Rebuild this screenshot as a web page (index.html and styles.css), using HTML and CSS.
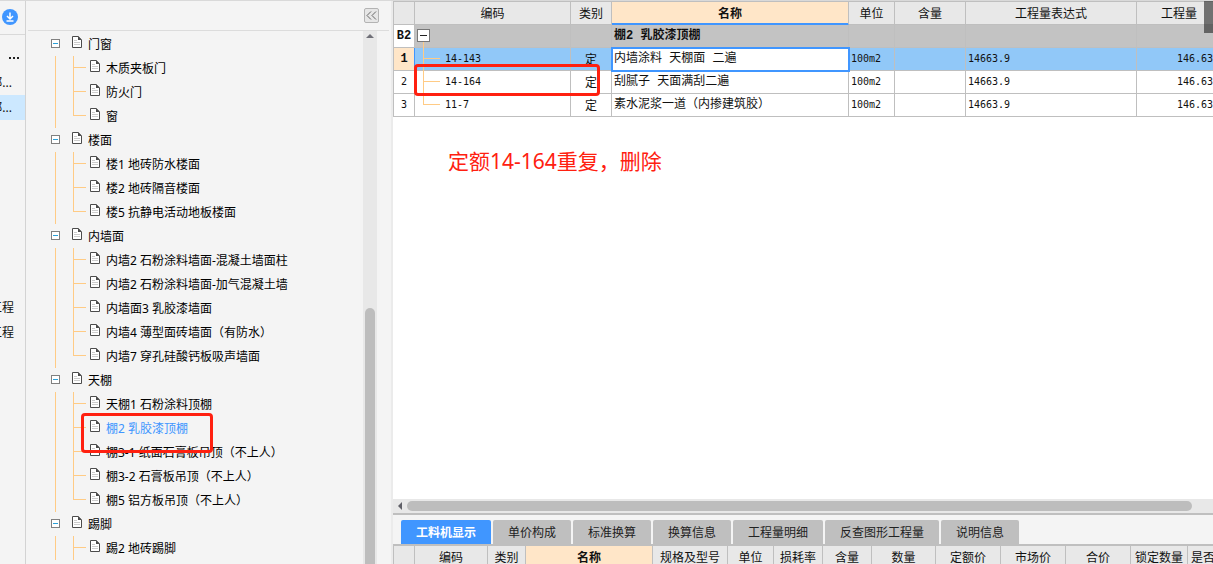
FILE: index.html
```html
<!DOCTYPE html>
<html lang="zh-CN">
<head>
<meta charset="utf-8">
<title>工程计价</title>
<link rel="stylesheet" href="styles.css">
</head>
<body>
<svg class="defs" aria-hidden="true">
  <symbol id="doc" viewBox="0 0 12 14">
    <path d="M1.5 1.5h5.6l3.4 3.4v7.6h-9z" fill="#fff" stroke="#4c4c4c"/>
    <path d="M7 1v4h4z" fill="#4c4c4c"/>
    <path d="M3 5.5h3M3 7.5h6M3 9.5h6" stroke="#ccc"/>
  </symbol>
</svg>
<div class="app">
  <aside class="rail">
    <div class="rail-top">
      <button class="download" aria-label="下载"><svg viewBox="0 0 16 16" width="16" height="16"><circle cx="8" cy="8" r="8" fill="#4096ff"/><path d="M8 3.5v6M5 7l3 3 3-3M4.5 12h7" fill="none" stroke="#fff" stroke-width="1.5"/></svg></button>
    </div>
    <ul class="rail-list">
      <li class="more"><svg viewBox="0 0 12 4" width="12" height="4"><path d="M1 1h2v2H1zM5 1h2v2H5zM9 1h2v2H9z" fill="#222"/></svg></li>
      <li>部...</li>
      <li class="current">部...</li>
    </ul>
    <ul class="rail-list rail-low">
      <li>工程</li>
      <li>工程</li>
    </ul>
  </aside>

  <section class="side">
    <header class="side-head">
      <button class="collapse" aria-label="收起"><svg viewBox="0 0 11 9" width="11" height="9"><path d="M5 .5l-4 4 4 4M10 .5l-4 4 4 4" fill="none" stroke="#666"/></svg></button>
    </header>
    <div class="side-body">
      <ul class="tree">
        <li>
          <div class="node"><button class="toggle" aria-label="折叠"></button><svg class="doc"><use href="#doc"/></svg><span>门窗</span></div>
          <ul class="kids">
            <li><svg class="doc"><use href="#doc"/></svg><span>木质夹板门</span></li>
            <li><svg class="doc"><use href="#doc"/></svg><span>防火门</span></li>
            <li><svg class="doc"><use href="#doc"/></svg><span>窗</span></li>
          </ul>
        </li>
        <li>
          <div class="node"><button class="toggle" aria-label="折叠"></button><svg class="doc"><use href="#doc"/></svg><span>楼面</span></div>
          <ul class="kids">
            <li><svg class="doc"><use href="#doc"/></svg><span>楼1 地砖防水楼面</span></li>
            <li><svg class="doc"><use href="#doc"/></svg><span>楼2 地砖隔音楼面</span></li>
            <li><svg class="doc"><use href="#doc"/></svg><span>楼5 抗静电活动地板楼面</span></li>
          </ul>
        </li>
        <li>
          <div class="node"><button class="toggle" aria-label="折叠"></button><svg class="doc"><use href="#doc"/></svg><span>内墙面</span></div>
          <ul class="kids">
            <li><svg class="doc"><use href="#doc"/></svg><span>内墙2 石粉涂料墙面-混凝土墙面柱</span></li>
            <li><svg class="doc"><use href="#doc"/></svg><span>内墙2 石粉涂料墙面-加气混凝土墙</span></li>
            <li><svg class="doc"><use href="#doc"/></svg><span>内墙面3 乳胶漆墙面</span></li>
            <li><svg class="doc"><use href="#doc"/></svg><span>内墙4 薄型面砖墙面（有防水）</span></li>
            <li><svg class="doc"><use href="#doc"/></svg><span>内墙7 穿孔硅酸钙板吸声墙面</span></li>
          </ul>
        </li>
        <li>
          <div class="node"><button class="toggle" aria-label="折叠"></button><svg class="doc"><use href="#doc"/></svg><span>天棚</span></div>
          <ul class="kids">
            <li><svg class="doc"><use href="#doc"/></svg><span>天棚1 石粉涂料顶棚</span></li>
            <li class="active"><svg class="doc"><use href="#doc"/></svg><span>棚2 乳胶漆顶棚</span><i class="mark mark-tree"></i></li>
            <li><svg class="doc"><use href="#doc"/></svg><span>棚3-1 纸面石膏板吊顶（不上人）</span></li>
            <li><svg class="doc"><use href="#doc"/></svg><span>棚3-2 石膏板吊顶（不上人）</span></li>
            <li><svg class="doc"><use href="#doc"/></svg><span>棚5 铝方板吊顶（不上人）</span></li>
          </ul>
        </li>
        <li>
          <div class="node"><button class="toggle" aria-label="折叠"></button><svg class="doc"><use href="#doc"/></svg><span>踢脚</span></div>
          <ul class="kids open">
            <li><svg class="doc"><use href="#doc"/></svg><span>踢2 地砖踢脚</span></li>
          </ul>
        </li>
      </ul>
      <div class="vscroll"><svg viewBox="0 0 8 4" width="8" height="4"><path d="M4 0l4 4H0z" fill="#707078"/></svg><div class="vthumb"></div></div>
    </div>
  </section>

  <main class="main">
    <div class="upper">
      <table class="grid">
        <colgroup><col class="w21"><col class="w156"><col class="w41"><col class="w237"><col class="w46"><col class="w71"><col class="w171"><col class="w85"></colgroup>
        <thead>
          <tr><th></th><th>编码</th><th>类别</th><th class="hot line">名称</th><th>单位</th><th>含量</th><th>工程量表达式</th><th>工程量</th></tr>
        </thead>
        <tbody>
          <tr class="group"><td class="no">B2</td><td class="code"><button class="fold" aria-label="折叠"></button></td><td></td><td class="name">棚2 乳胶漆顶棚</td><td></td><td></td><td></td><td></td></tr>
          <tr class="picked"><td class="no">1</td><td class="code branch">14-143</td><td class="kind">定</td><td class="name editing">内墙涂料 天棚面 二遍</td><td class="num">100m2</td><td></td><td class="num">14663.9</td><td class="num qty">146.63</td></tr>
          <tr><td class="no">2</td><td class="code branch">14-164<i class="mark mark-row"></i></td><td class="kind">定</td><td class="name">刮腻子 天面满刮二遍</td><td class="num">100m2</td><td></td><td class="num">14663.9</td><td class="num qty">146.63</td></tr>
          <tr><td class="no">3</td><td class="code branch last">11-7</td><td class="kind">定</td><td class="name">素水泥浆一道（内掺建筑胶）</td><td class="num">100m2</td><td></td><td class="num">14663.9</td><td class="num qty">146.63</td></tr>
        </tbody>
      </table>
      <p class="note">定额14-164重复，删除</p>
      <div class="corner"></div>
    </div>
    <div class="hscroll"><svg viewBox="0 0 4 8" width="4" height="8"><path d="M4 0v8L0 4z" fill="#606068"/></svg><div class="hthumb"></div></div>
    <nav class="tabs">
      <button class="on">工料机显示</button><button>单价构成</button><button>标准换算</button><button>换算信息</button><button>工程量明细</button><button>反查图形工程量</button><button>说明信息</button>
    </nav>
    <div class="lower">
      <table class="grid">
        <colgroup><col class="w21"><col class="w73"><col class="w38"><col class="w127"><col class="w75"><col class="w46"><col class="w49"><col class="w49"><col class="w64"><col class="w65"><col class="w65"><col class="w65"><col class="w57"><col class="w57"></colgroup>
        <thead>
          <tr><th></th><th>编码</th><th>类别</th><th class="hot">名称</th><th>规格及型号</th><th>单位</th><th>损耗率</th><th>含量</th><th>数量</th><th>定额价</th><th>市场价</th><th>合价</th><th>锁定数量</th><th class="cut">是否</th></tr>
        </thead>
      </table>
    </div>
  </main>
</div>
</body>
</html>
```
FILE: styles.css
```css
* { box-sizing: border-box; }
body {
  margin: 0;
  overflow: hidden;
  background: #f4f4f4;
  color: #111;
  font: 12px/24px "Noto Sans", "Noto Sans CJK SC", sans-serif;
}
ul { list-style: none; margin: 0; padding: 0; }
button { margin: 0; padding: 0; border: 0; background: none; font: inherit; color: inherit; }
svg { display: block; flex: none; }
.defs { position: absolute; width: 0; height: 0; }
.app { display: flex; height: 100vh; border-top: 1px solid #d9d9d9; }

.rail { flex: none; width: 26px; border-right: 1px solid #d3d3d3; overflow: hidden; }
.rail-top { height: 34px; padding: 8px 0 0 2px; border-bottom: 1px solid #d9d9d9; }
.rail-list { padding-top: 10px; }
.rail-list li { display: flex; justify-content: flex-end; align-items: center; height: 25px; padding-right: 13px; white-space: nowrap; }
.rail-list .more { padding-right: 5px; }
.rail-list .current { background: #cce8ff; }
.rail-low { padding-top: 175px; }
.rail-low li { padding-right: 11px; }

.side { flex: none; display: flex; flex-direction: column; width: 367px; padding-left: 2px; border-right: 2px solid #ebebeb; }
.side-head { display: flex; justify-content: flex-end; height: 30px; padding: 7px 10px 0 0; margin-right: 2px; border-bottom: 1px solid #dcdcdc; }
.collapse { display: grid; place-items: center; width: 15px; height: 15px; border: 1px solid #b3b3b3; border-radius: 2px; background: #e6e6e6; }
.side-body { flex: 1; display: flex; min-height: 0; overflow: hidden; }
.tree { flex: 1; padding: 1px 0 0 23px; color: #000; }
.tree span { padding-top: 2px; }
.node { display: flex; align-items: center; height: 24px; }
.toggle { position: relative; width: 9px; height: 9px; margin: 0 11px 1px 0; border: 1px solid #808080; background: #fff; }
.toggle::after { content: ""; position: absolute; left: 1px; top: 3px; width: 5px; height: 1px; background: #2ba0d8; }
.doc { width: 12px; height: 14px; margin: 0 5px 4px 0; }
.kids { margin-left: 4px; padding-left: 17px; border-left: 1px solid #ffcb85; }
.kids li { position: relative; display: flex; align-items: center; height: 24px; padding-left: 16px; white-space: nowrap; }
.kids li::before { content: ""; position: absolute; left: 0; top: 0; width: 1px; height: 24px; background: #ffcb85; }
.kids li:last-child::before { height: 12px; }
.kids.open li::before { height: 24px; }
.kids li::after { content: ""; position: absolute; left: 0; top: 11px; width: 13px; height: 1px; background: #ffcb85; }
.active span { color: #4096ff; }
.vscroll { flex: none; display: flex; flex-direction: column; align-items: center; width: 14px; margin-right: 14px; padding-top: 3px; background: #e8e8e8; }
.vthumb { flex: 1; width: 10px; margin-top: 270px; border-radius: 5px 5px 0 0; background: #bdbdbd; }

.mark { position: absolute; z-index: 2; border: 3px solid #ff2010; border-radius: 4px; pointer-events: none; }
.mark-tree { left: 8px; top: -3px; width: 132px; height: 40px; }
.mark-row { left: -1px; top: -7px; width: 186px; height: 32px; }

.main { flex: 1; display: flex; flex-direction: column; min-width: 0; }
.upper { position: relative; flex: 1; min-height: 0; overflow: hidden; background: #fff; }
.grid { table-layout: fixed; width: 0; border-collapse: separate; border-spacing: 0; border-top: 1px solid #bfbfbf; border-left: 1px solid #bfbfbf; line-height: 20px; }
.grid th, .grid td { height: 23px; padding: 0; border-right: 1px solid #bfbfbf; border-bottom: 1px solid #bfbfbf; white-space: nowrap; overflow: hidden; }
.grid th { padding-top: 2px; background: #e8e8e8; font-weight: 400; text-align: center; }
.grid .hot { background: #ffe6c8; font-weight: 700; }
.grid .line { border-bottom-color: #4096ff; box-shadow: inset 0 -1px #4096ff; }
.grid .cut { padding-left: 3px; text-align: left; }
.w21 { width: 21px; } .w38 { width: 38px; } .w41 { width: 41px; } .w46 { width: 46px; }
.w49 { width: 49px; } .w57 { width: 57px; } .w64 { width: 64px; } .w65 { width: 65px; }
.w71 { width: 71px; } .w73 { width: 73px; } .w75 { width: 75px; } .w85 { width: 85px; }
.w127 { width: 127px; } .w156 { width: 156px; } .w171 { width: 171px; } .w237 { width: 237px; }
.group td { background: #c3c3c3; font-weight: 700; }
.picked td { background: #91c8f8; }
.grid .no { background: #fff; font: 10px/20px "DejaVu Sans Mono", monospace; text-align: center; }
.grid .group .no { font: 700 12px/20px "Liberation Mono", monospace; }
.grid .picked .no { background: #ffe6c8; font: 700 12px/20px "Liberation Mono", monospace; border-right-color: #4096ff; }
.grid .code { position: relative; padding-left: 30px; overflow: visible; font: 10px/20px "DejaVu Sans Mono", monospace; }
.fold { position: absolute; left: 2px; top: 4px; width: 13px; height: 13px; border: 1px solid #777; background: #fff; }
.fold::after { content: ""; position: absolute; left: 2px; top: 5px; width: 7px; height: 1px; background: #222; }
.branch::before { content: ""; position: absolute; left: 8px; top: -1px; width: 1px; height: 24px; background: #ffcb85; }
.picked .branch::before { top: -6px; height: 29px; }
.last::before { height: 12px; }
.branch::after { content: ""; position: absolute; left: 8px; top: 10px; width: 17px; height: 1px; background: #ffcb85; }
.grid .kind { padding-top: 2px; text-align: center; }
.grid .name { padding-left: 2px; font-family: "Liberation Mono", "Noto Sans CJK SC", monospace; }
.grid .editing { background: #fff; outline: 2px solid #4096ff; outline-offset: -1px; }
.grid .num { padding-left: 2px; font: 10px/20px "DejaVu Sans Mono", monospace; }
.grid .qty { padding-left: 40px; }
.note { margin: 28px 0 0 55px; color: #ff2010; font-size: 21px; line-height: 32px; }
.corner { position: absolute; right: 0; top: 0; width: 9px; height: 32px; background: rgba(40, 40, 40, .62); }

.hscroll { flex: none; display: flex; align-items: center; gap: 5px; height: 16px; padding: 0 21px 0 5px; border-bottom: 2px solid #bfbfbf; background: #e8e8e8; }
.hthumb { flex: 1; height: 10px; border-radius: 5px; background: #bdbdbd; }
.tabs { flex: none; display: flex; gap: 2px; padding: 5px 0 0 8px; }
.tabs button { height: 24px; padding: 2px 15px 0; border-radius: 2px 2px 0 0; background: #bfbfbf; color: #222; line-height: 22px; white-space: nowrap; }
.tabs .on { background: #4096ff; color: #fff; font-weight: 700; }
.lower { flex: none; height: 20px; overflow: hidden; }
.lower .grid { border-top-width: 2px; }
```
